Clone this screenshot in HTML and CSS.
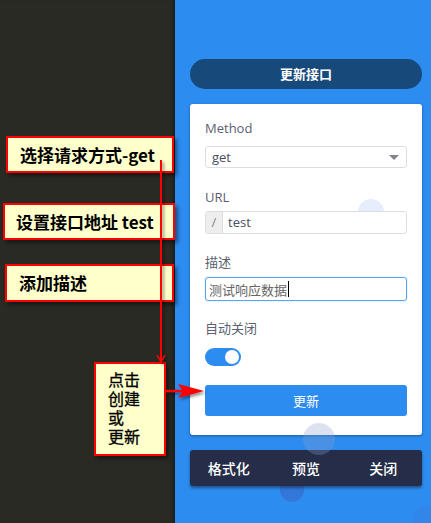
FILE: index.html
```html
<!DOCTYPE html>
<html lang="zh">
<head>
<meta charset="utf-8">
<title>更新接口</title>
<link rel="stylesheet" href="styles.css">
</head>
<body>
<div class="page">
  <aside class="side"></aside>
  <main class="panel">
    <div class="title">更新接口</div>
    <section class="card">
      <span class="bubble bubble-a"></span>
      <span class="bubble bubble-b"></span>
      <div class="label first">Method</div>
      <div class="select"><span>get</span><span class="caret"></span></div>
      <div class="label url-label">URL</div>
      <div class="input-group"><span class="prepend">/</span><span class="value">test</span></div>
      <div class="label desc-label">描述</div>
      <div class="input focused"><span>测试响应数据</span><span class="cursor"></span></div>
      <div class="label close-label">自动关闭</div>
      <div class="switch"><span class="knob"></span></div>
      <div class="btn">更新</div>
    </section>
    <div class="footer-wrap">
      <span class="bubble bubble-c"></span>
      <nav class="footer">
        <span>格式化</span>
        <span>预览</span>
        <span>关闭</span>
      </nav>
    </div>
    <span class="bubble bubble-d"></span>
  </main>

  <div class="note note-1">选择请求方式-get</div>
  <div class="note note-2">设置接口地址 test</div>
  <div class="note note-3">添加描述</div>
  <div class="note note-4">点击<br>创建<br>或<br>更新</div>

  <svg class="arrows" width="431" height="523" viewBox="0 0 431 523">
    <defs>
      <filter id="sh" x="-50%" y="-50%" width="200%" height="200%">
        <feDropShadow dx="2" dy="2" stdDeviation="1.5" flood-color="#000" flood-opacity="0.45"/>
      </filter>
    </defs>
    <g filter="url(#sh)">
      <line x1="161" y1="160" x2="161" y2="361" stroke="#f00" stroke-width="2"/>
      <polyline points="157,355 161,362 165,355" fill="none" stroke="#f00" stroke-width="1.5"/>
      <line x1="166" y1="391" x2="184" y2="391" stroke="#f00" stroke-width="2.5"/>
      <polygon points="178,384 204,391 178,398 183,391" fill="#f00"/>
    </g>
  </svg>
</div>
</body>
</html>
```
FILE: styles.css
```css
* { box-sizing: border-box; }
html, body { margin: 0; padding: 0; }
body {
  width: 431px;
  height: 523px;
  overflow: hidden;
  font-family: "Open Sans", "Noto Sans CJK SC", sans-serif;
}
.page {
  position: relative;
  display: flex;
  width: 431px;
  height: 523px;
}
.side {
  width: 175px;
  background: #2a2a25;
  box-shadow: inset -3px 0 3px -1px #1e1e1a;
}
.panel {
  position: relative;
  flex: 1;
  background: #2d8cf0;
  padding: 59px 9px 0 15px;
}
.title {
  height: 30px;
  border-radius: 15px;
  background: #174a7b;
  color: #fff;
  font-family: "Noto Sans CJK SC", sans-serif;
  font-weight: 700;
  font-size: 13px;
  line-height: 30px;
  text-align: center;
}
.card {
  position: relative;
  margin-top: 15px;
  background: #fff;
  border-radius: 3px;
  padding: 14px 15px 19px;
  box-shadow: 0 1px 3px rgba(0, 0, 0, 0.35);
  display: flex;
  flex-direction: column;
}
.label {
  font-size: 13px;
  line-height: 20px;
  height: 20px;
  color: #5b6170;
}
.url-label { margin-top: 19px; }
.desc-label { margin-top: 18px; font-family: "Noto Sans CJK SC", sans-serif; }
.close-label { margin-top: 17px; font-family: "Noto Sans CJK SC", sans-serif; }
.select {
  position: relative;
  margin-top: 8px;
  height: 22px;
  border: 1px solid #dddee1;
  border-radius: 3px;
  display: flex;
  align-items: center;
  justify-content: space-between;
  padding: 0 7px 0 6px;
  font-size: 13px;
  color: #495060;
}
.caret {
  width: 0;
  height: 0;
  border-left: 5px solid transparent;
  border-right: 5px solid transparent;
  border-top: 5px solid #80848f;
}
.input-group {
  position: relative;
  margin-top: 4px;
  height: 23px;
  border: 1px solid #dddee1;
  border-radius: 3px;
  display: flex;
  background: #fff;
  font-size: 13px;
  color: #495060;
}
.prepend {
  width: 17px;
  background: #eeeeee;
  border-right: 1px solid #dddee1;
  border-radius: 3px 0 0 3px;
  color: #80848f;
  text-align: center;
  line-height: 21px;
}
.value {
  padding-left: 5px;
  line-height: 21px;
}
.input {
  position: relative;
  margin-top: 5px;
  height: 24px;
  border: 1px solid #57a3f3;
  border-radius: 3px;
  box-shadow: 0 0 2px rgba(45, 140, 240, 0.3);
  display: flex;
  align-items: center;
  padding-left: 3px;
  font-family: "Noto Sans CJK SC", sans-serif;
  font-size: 13px;
  color: #666;
}
.cursor {
  width: 1px;
  height: 16px;
  background: #000;
  margin-left: 1px;
}
.switch {
  margin-top: 10px;
  width: 36px;
  height: 18px;
  border-radius: 9px;
  background: #2d8cf0;
  display: flex;
  align-items: center;
  justify-content: flex-end;
  padding-right: 2px;
}
.knob {
  width: 14px;
  height: 14px;
  border-radius: 50%;
  background: #fff;
}
.btn {
  margin-top: 19px;
  height: 31px;
  border-radius: 3px;
  background: #2d8cf0;
  color: #fff;
  font-family: "Noto Sans CJK SC", sans-serif;
  font-size: 13px;
  line-height: 31px;
  text-align: center;
}
.footer-wrap {
  position: relative;
  margin-top: 15px;
}
.footer {
  position: relative;
  height: 36px;
  border-radius: 3px;
  background: #252d48;
  box-shadow: 0 2px 3px rgba(0, 0, 0, 0.4);
  display: grid;
  grid-template-columns: 1fr 1fr 1fr;
  align-items: center;
  text-align: center;
  color: #fff;
  font-family: "Noto Sans CJK SC", sans-serif;
  font-weight: 500;
  font-size: 14px;
}
.bubble {
  position: absolute;
  border-radius: 50%;
}
.bubble-a {
  left: 168px;
  top: 95px;
  width: 26px;
  height: 26px;
  background: #e6eefd;
}
.bubble-b {
  left: 113px;
  top: 319px;
  width: 32px;
  height: 32px;
  background: rgba(140, 160, 205, 0.3);
  z-index: 2;
}
.bubble-c {
  left: 90px;
  top: 28px;
  width: 24px;
  height: 24px;
  background: rgba(60, 80, 175, 0.35);
}
.bubble-d {
  left: 238px;
  top: 506px;
  width: 28px;
  height: 28px;
  background: rgba(60, 120, 220, 0.35);
}
.note {
  position: absolute;
  background: #ffffcc;
  border: 2px solid #ff0000;
  color: #000;
  font-family: "Noto Sans CJK SC", sans-serif;
  font-weight: 700;
  font-size: 17px;
  white-space: nowrap;
  box-shadow: 3px 3px 4px rgba(0, 0, 0, 0.45);
}
.note-1 {
  left: 6px;
  top: 136px;
  width: 168px;
  height: 37px;
  padding-left: 12px;
  line-height: 33px;
}
.note-2 {
  left: 3px;
  top: 203px;
  width: 172px;
  height: 37px;
  padding-left: 11px;
  line-height: 33px;
}
.note-3 {
  left: 5px;
  top: 264px;
  width: 169px;
  height: 38px;
  padding-left: 12px;
  line-height: 33px;
}
.note-4 {
  left: 94px;
  top: 362px;
  width: 72px;
  height: 94px;
  padding: 6px 0 0 12px;
  line-height: 19px;
  font-weight: 400;
  font-size: 16px;
  -webkit-text-stroke: 0.3px #000;
}
.arrows {
  position: absolute;
  left: 0;
  top: 0;
  pointer-events: none;
}
```
